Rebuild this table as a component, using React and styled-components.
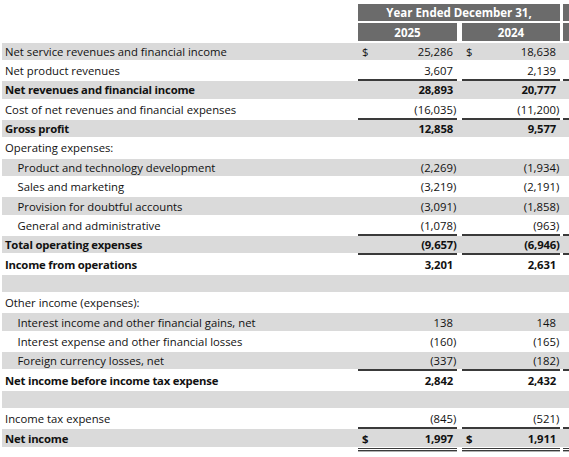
import React from 'react';
import styled, { createGlobalStyle } from 'styled-components';

const Global = createGlobalStyle`
  html, body { margin: 0; padding: 0; background: #fff; overflow: hidden; }
  body { font-family: "Open Sans", "Liberation Sans", sans-serif; color: #111; }
`;

const COLS = '356px 99px 5px 98px 3px 100px';
const LINE = '#3a3a3a';

const Sheet = styled.div`
  width: 569px;
  height: 457px;
  overflow: hidden;
  box-sizing: border-box;
  padding: 4px 0 0 2px;
`;

const Band = styled.div`
  display: grid;
  grid-template-columns: ${COLS};
  height: ${(p) => p.$h}px;
  margin-bottom: ${(p) => p.$gap || 0}px;
`;

const HeadCell = styled.div`
  grid-column: ${(p) => p.$col};
  background: #6b6b6b;
  color: #fff;
  font-weight: 700;
  font-size: 11.5px;
  display: flex;
  align-items: center;
  justify-content: center;
  white-space: nowrap;
`;

const Row = styled.div`
  display: grid;
  grid-template-columns: ${COLS};
  box-sizing: border-box;
  height: 19.35px;
  padding: 1px 0;
  background: ${(p) => (p.$shade ? '#dadada' : 'transparent')};
  background-clip: content-box;
  font-size: 11.3px;
  font-weight: ${(p) => (p.$bold ? 700 : 400)};
  letter-spacing: ${(p) => (p.$bold ? '-0.2px' : '0')};
`;

const Label = styled.div`
  grid-column: 1;
  display: flex;
  align-items: center;
  padding-left: ${(p) => 3 + p.$indent * 12.5}px;
  white-space: nowrap;
`;

const shadows = {
  over: `0 -2px 0 ${LINE}`,
  box: `0 -2px 0 ${LINE}, 0 2px 0 ${LINE}`,
  total: `0 -2px 0 ${LINE}, 0 1px 0 #fff, 0 2px 0 ${LINE}, 0 3px 0 #fff, 0 4.4px 0 ${LINE}`,
};

const Amount = styled.div`
  grid-column: ${(p) => p.$col};
  display: flex;
  align-items: center;
  justify-content: space-between;
  padding: 0 0.5px 0 4px;
  white-space: nowrap;
  box-shadow: ${(p) => (p.$rule ? shadows[p.$rule] : 'none')};
`;

const Figure = styled.span`
  margin-left: auto;
`;

const Paren = styled.span`
  display: inline-block;
  width: 3.6px;
`;

const rows = [
  { label: 'Net service revenues and financial income', a: '25,286', b: '18,638', cur: true },
  { label: 'Net product revenues', a: '3,607', b: '2,139' },
  { label: 'Net revenues and financial income', a: '28,893', b: '20,777', bold: true, rule: 'over' },
  { label: 'Cost of net revenues and financial expenses', a: '(16,035)', b: '(11,200)' },
  { label: 'Gross profit', a: '12,858', b: '9,577', bold: true, rule: 'over' },
  { label: 'Operating expenses:' },
  { label: 'Product and technology development', a: '(2,269)', b: '(1,934)', indent: 1 },
  { label: 'Sales and marketing', a: '(3,219)', b: '(2,191)', indent: 1 },
  { label: 'Provision for doubtful accounts', a: '(3,091)', b: '(1,858)', indent: 1 },
  { label: 'General and administrative', a: '(1,078)', b: '(963)', indent: 1 },
  { label: 'Total operating expenses', a: '(9,657)', b: '(6,946)', bold: true, rule: 'box' },
  { label: 'Income from operations', a: '3,201', b: '2,631', bold: true },
  { label: '' },
  { label: 'Other income (expenses):' },
  { label: 'Interest income and other financial gains, net', a: '138', b: '148', indent: 1 },
  { label: 'Interest expense and other financial losses', a: '(160)', b: '(165)', indent: 1 },
  { label: 'Foreign currency losses, net', a: '(337)', b: '(182)', indent: 1 },
  { label: 'Net income before income tax expense', a: '2,842', b: '2,432', bold: true, rule: 'over' },
  { label: '' },
  { label: 'Income tax expense', a: '(845)', b: '(521)' },
  { label: 'Net income', a: '1,997', b: '1,911', bold: true, cur: true, rule: 'total' },
];

function Value({ col, value, cur, rule }) {
  const neg = value && value.endsWith(')');
  return (
    <Amount $col={col} $rule={rule}>
      {cur ? <span>$</span> : null}
      {value ? (
        <Figure>
          {neg ? value.slice(0, -1) : value}
          <Paren>{neg ? ')' : ''}</Paren>
        </Figure>
      ) : null}
    </Amount>
  );
}

export default function App() {
  return (
    <>
      <Global />
      <Sheet>
        <Band $h={17} $gap={2}>
          <HeadCell $col="2 / 5">Year Ended December 31,</HeadCell>
          <HeadCell $col="6" />
        </Band>
        <Band $h={18} $gap={0.6}>
          <HeadCell $col="2">2025</HeadCell>
          <HeadCell $col="4">2024</HeadCell>
          <HeadCell $col="6" />
        </Band>
        {rows.map((r, i) => (
          <Row key={i} $shade={i % 2 === 0} $bold={r.bold}>
            <Label $indent={r.indent || 0}>{r.label}</Label>
            <Value col={2} value={r.a} cur={r.cur} rule={r.rule} />
            <Value col={4} value={r.b} cur={r.cur} rule={r.rule} />
            <Value col={6} rule={r.rule} />
          </Row>
        ))}
      </Sheet>
    </>
  );
}
